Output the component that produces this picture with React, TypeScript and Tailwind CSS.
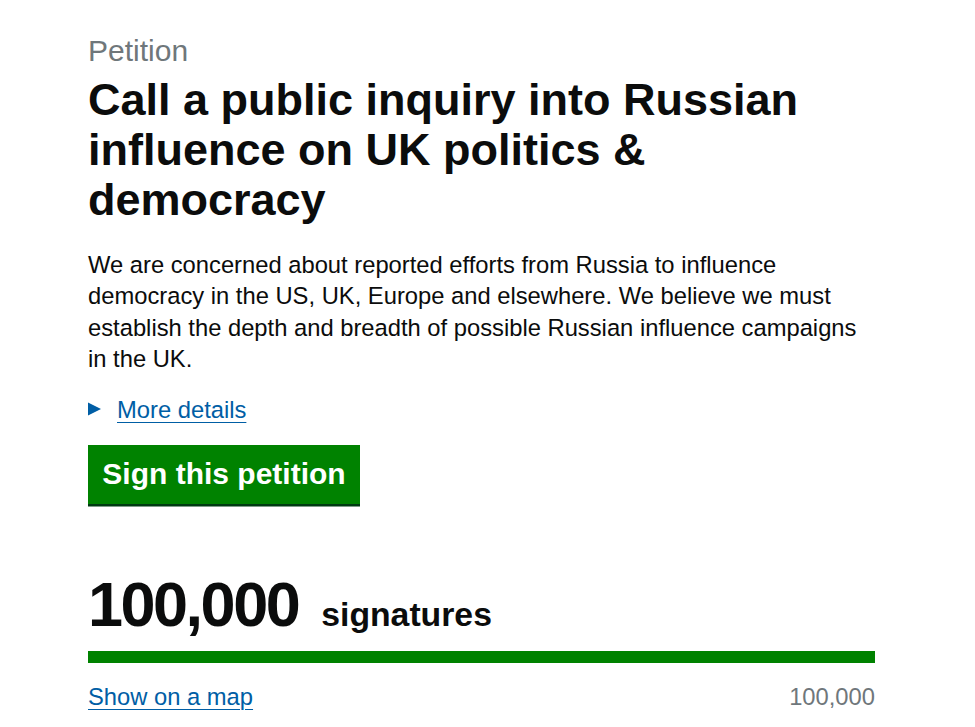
import React from "react";

export default function App() {
  return (
    <div
      className="min-h-screen bg-white text-[#0b0c0c]"
      style={{ fontFamily: '"Liberation Sans", Arial, Helvetica, sans-serif' }}
    >
      <div className="pl-[88px] pt-[35.5px]">
        <div className="w-[787px]">
          <div className="text-[30px] leading-[30px] text-[#6f777b]">Petition</div>
          <h1 className="mt-[9px] text-[45px] leading-[50px] font-bold">
            Call a public inquiry into Russian influence on UK politics &amp; democracy
          </h1>
          <p className="mt-[24.5px] text-[23.75px] leading-[31.25px]">
            We are concerned about reported efforts from Russia to influence democracy in the US, UK, Europe
            and elsewhere. We believe we must establish the depth and breadth of possible Russian influence
            campaigns in the UK.
          </p>
          <div className="mt-[20px] flex items-center text-[23.75px] leading-[31.25px]">
            <svg width="14" height="14" viewBox="0 0 14 14" className="mr-[15px] mt-[-1px]">
              <polygon points="0,0.5 13,7 0,13.5" fill="#005ea5" />
            </svg>
            <a
              href="#"
              className="text-[#005ea5] underline decoration-1 underline-offset-[4px]"
            >
              More details
            </a>
          </div>
          <div className="mt-[19.5px]">
            <button className="w-[272px] bg-[#008200] py-[14.5px] text-[30px] leading-[30px] font-bold text-white shadow-[0_2.5px_0_#003a12]">
              Sign this petition
            </button>
          </div>
          <div className="mt-[70px] flex items-baseline">
            <span className="text-[63px] leading-[60px] font-bold tracking-[-2.5px]">100,000</span>
            <span className="ml-[23px] text-[33.75px] leading-[40px] font-bold">signatures</span>
          </div>
          <div className="mt-[17px] h-[12.5px] w-full bg-[#008200]" />
          <div className="mt-[18px] flex items-baseline justify-between text-[23.75px] leading-[31.25px]">
            <a href="#" className="text-[#005ea5] underline decoration-1 underline-offset-[4px]">
              Show on a map
            </a>
            <span className="text-[#6f777b]">100,000</span>
          </div>
        </div>
      </div>
    </div>
  );
}
